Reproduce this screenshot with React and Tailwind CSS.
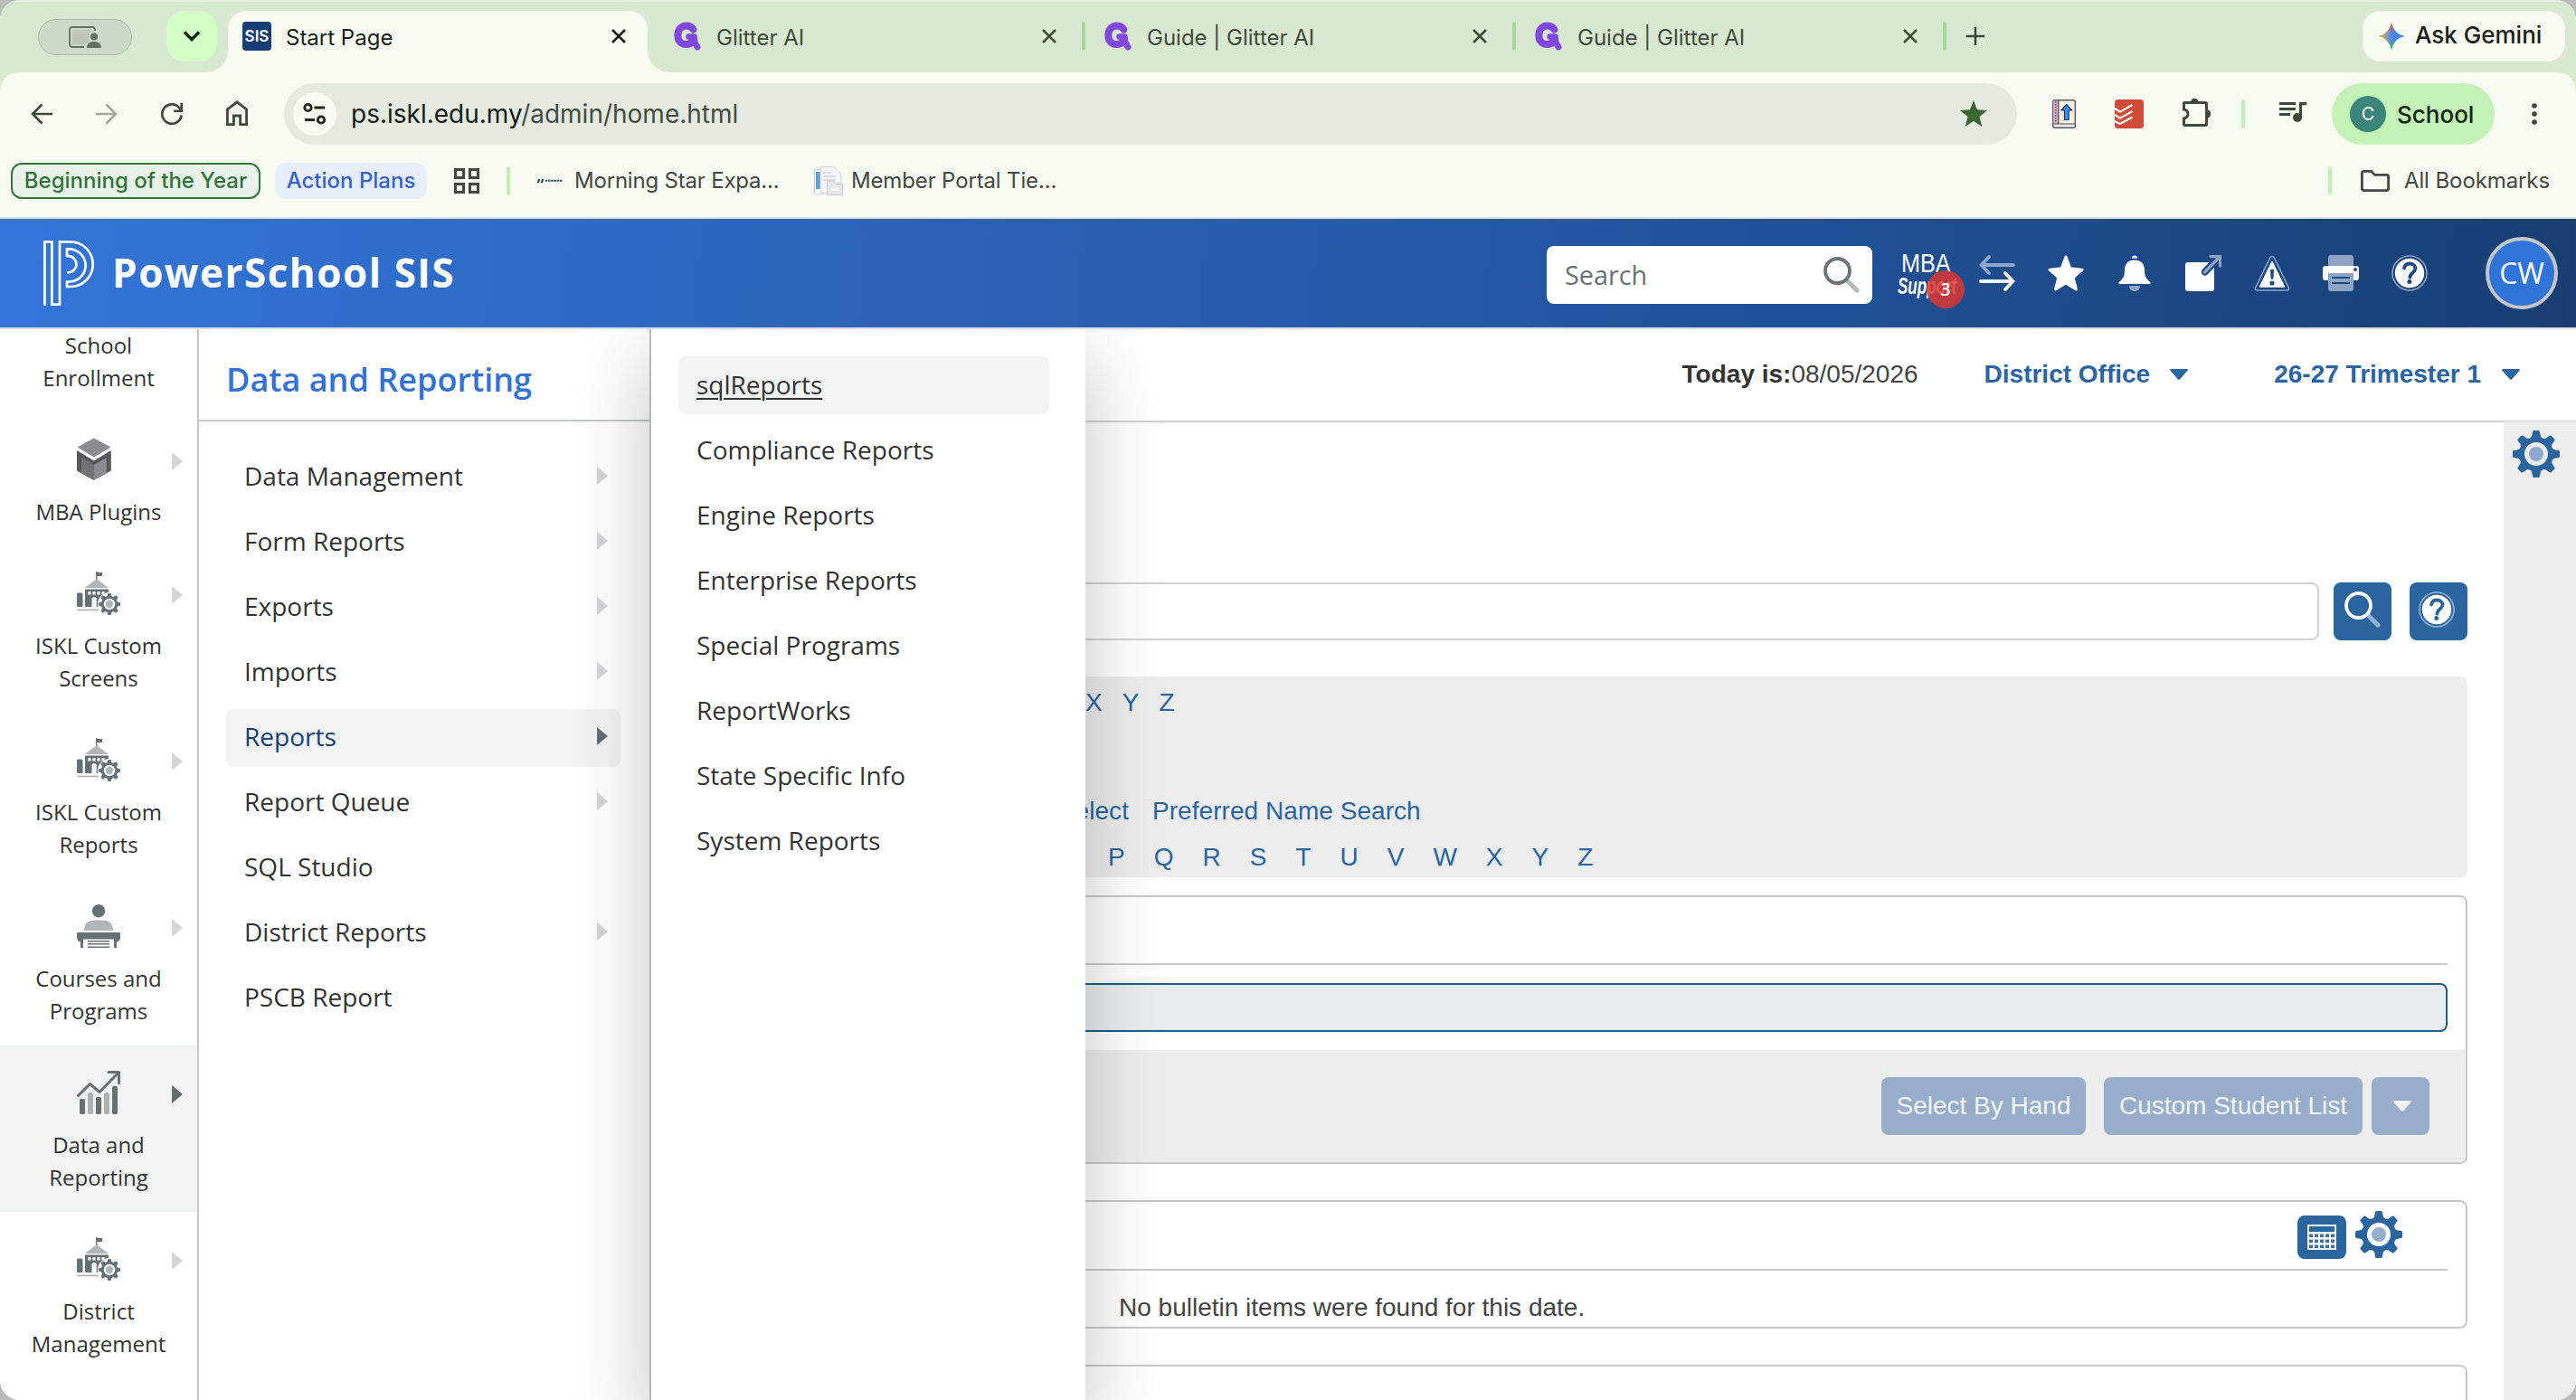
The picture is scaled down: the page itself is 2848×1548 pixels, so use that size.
import React from "react";

const TABS = ["Glitter AI", "Guide | Glitter AI", "Guide | Glitter AI"];

const SIDEBAR_ITEMS = [
    { label: "MBA Plugins", icon: "cube" },
    { label: "ISKL Custom Screens", icon: "school" },
    { label: "ISKL Custom Reports", icon: "school" },
    { label: "Courses and Programs", icon: "podium" },
    { label: "Data and Reporting", icon: "chart", active: true },
    { label: "District Management", icon: "school" },
];

const MENU_ITEMS = [
    { label: "Data Management", more: true },
    { label: "Form Reports", more: true },
    { label: "Exports", more: true },
    { label: "Imports", more: true },
    { label: "Reports", more: true, active: true },
    { label: "Report Queue", more: true },
    { label: "SQL Studio" },
    { label: "District Reports", more: true },
    { label: "PSCB Report" },
];

const REPORT_ITEMS = [
    "sqlReports",
    "Compliance Reports",
    "Engine Reports",
    "Enterprise Reports",
    "Special Programs",
    "ReportWorks",
    "State Specific Info",
    "System Reports",
];

const TEETH = [0, 45, 90, 135, 180, 225, 270, 315];

function Gear({ className, hole = "#fff", dot = "#94aecb" }) {
    return (
        <svg viewBox="0 0 52 52" className={className} fill="currentColor">
            <circle cx="26" cy="26" r="19" />
            {TEETH.map((deg) => (
                <path
                    key={deg}
                    d="M23.5 0h5a1.5 1.5 0 0 1 1.4 1.2l1 5.3 3.6 4.5h-17l3.6-4.5 1-5.3A1.5 1.5 0 0 1 23.5 0z"
                    transform={`rotate(${deg} 26 26)`}
                />
            ))}
            <circle cx="26" cy="26" r="13" fill={hole} />
            <circle cx="26" cy="26" r="8" fill={dot} />
        </svg>
    );
}

function CloseIcon() {
    return (
        <svg viewBox="0 0 16 16" className="size-4" stroke="currentColor" strokeWidth="2.6">
            <path d="M1 1l14 14M15 1L1 15" />
        </svg>
    );
}

function GlitterIcon() {
    return (
        <svg viewBox="0 0 32 32" className="size-8" fill="none" stroke="#8048dc" strokeLinecap="round" strokeLinejoin="round">
            <path d="M22.300 8.500C20.500 5.500 18 4.400 15 4.400C8.800 4.400 5.300 9.200 5.300 15.200C5.300 21.200 9 25 14.500 25C18.500 25 21.500 23 22.800 19.500" strokeWidth="8" />
            <path d="M17.500 16.500H23.500L24.500 24" strokeWidth="6.500" />
            <path d="M24.500 24l2.500 4" strokeWidth="7" />
        </svg>
    );
}

function MoreArrow({ active }) {
    return (
        <svg viewBox="0 0 12 20" className={active ? "h-5 w-3 text-[#646e72]" : "h-5 w-3 text-[#d3d7d8]"} fill="currentColor">
            <path d="M0 0l12 10L0 20z" />
        </svg>
    );
}

function DownTriangle({ className }) {
    return (
        <svg viewBox="0 0 20 12" className={className} fill="currentColor">
            <path d="M1 0h18c.9 0 1.3.9.7 1.6l-8.7 9.8c-.5.6-1.5.6-2 0L.3 1.6C-.3.9.1 0 1 0z" />
        </svg>
    );
}

function HelpIcon({ className, mark }) {
    return (
        <svg viewBox="0 0 40 40" className={className} fill="none">
            <circle cx="20" cy="20" r="19" stroke="#fff" strokeOpacity=".5" strokeWidth="1.6" />
            <circle cx="20" cy="20" r="16.2" fill="#fff" />
            <path d="M14 14.5c.6-3.4 3-5 6-5 3.600 0 6.400 2 6.400 5.200 0 4.800-6 5-6 10" stroke={mark} strokeWidth="3.800" strokeLinecap="round" />
            <circle cx="19.800" cy="29.600" r="2.500" fill={mark} />
        </svg>
    );
}

function SearchIcon({ className, ring, handle }) {
    return (
        <svg viewBox="0 0 40 40" className={className} fill="none">
            <path d="M26 26l11 11.200" stroke={handle} strokeWidth="5" strokeLinecap="round" />
            <circle cx="15.500" cy="15.500" r="13.500" stroke={ring} strokeWidth="3.800" />
        </svg>
    );
}

function SchoolIcon() {
    return (
        <svg viewBox="0 0 48 48" className="size-12">
            <path d="M21 0h1.500v1H28v4h-5.500v4H21z" fill="#667175" />
            <path d="M21.700 8L35 18H8.500z" fill="#b1b6b7" />
            <path d="M9 19.500h26V28l-5 11H9z" fill="#667175" />
            <path d="M12.500 22h3v3.500h-3zM17.500 22h3v3.500h-3zM22.500 22h3v3.500h-3zM27.500 22h3v3.500h-3z" fill="#fff" />
            <path d="M16.500 39V30.500a2.600 2.600 0 0 1 5.200 0V39z" fill="#fff" />
            <rect x="0" y="23.500" width="6.500" height="15.500" rx="1.500" fill="#667175" />
            <rect x="0" y="41.500" width="24" height="1.800" fill="#b1b6b7" />
            <circle cx="36" cy="36" r="13" fill="#fff" />
            <g transform="translate(24 24) scale(.4615)" fill="#667175">
                <circle cx="26" cy="26" r="20" />
                {TEETH.map((deg) => (
                    <path key={deg} d="M22.500 0h7l2 7 3 4h-17l3-4z" transform={`rotate(${deg} 26 26)`} />
                ))}
                <circle cx="26" cy="26" r="13.500" fill="#fff" />
                <circle cx="26" cy="26" r="9" fill="#b1b6b7" />
            </g>
        </svg>
    );
}

function SidebarIcon({ name }) {
    if (name === "cube") {
        return (
            <svg viewBox="0 0 48 48" className="size-12">
                <path d="M18.800 .5L37.500 10.500 18.800 21.500 0.500 10.500z" fill="#8b8c8e" />
                <path d="M0 14l18.800 11.500L37.800 14v22.500L18.800 47 0 36.500z" fill="#58585a" />
                <path d="M5 22l13.800 8V47L5 39z" fill="#727375" />
                <path d="M32.800 22l-14 8V47l14-8z" fill="#8b8c8e" />
            </svg>
        );
    }
    if (name === "podium") {
        return (
            <svg viewBox="0 0 48 48" className="size-12" fill="#667175">
                <circle cx="24" cy="7.200" r="7.200" />
                <path d="M8 29c0-8 5-11.500 11-11.500h10c6 0 11 3.500 11 11.500z" fill="#b1b6b7" />
                <path d="M1 31h46c.7 0 1 .4 1 1v4c0 3-1.500 5.500-4 5.500V48h-3V38.500H7V48H4v-6.500c-2.500 0-4-2.500-4-5.500v-4c0-.6.3-1 1-1z" />
                <path d="M12 40h24v1.500H12zM12 43h24v1.500H12zM12 46.500h24V48H12z" />
            </svg>
        );
    }
    if (name === "chart") {
        return (
            <svg viewBox="0 0 48 48" className="size-12" fill="#667175">
                <rect x="3" y="31" width="6" height="17" rx="1.500" />
                <rect x="12" y="24" width="6" height="24" rx="1.500" fill="#adb3b4" />
                <rect x="21" y="29" width="6" height="19" rx="1.500" />
                <rect x="30" y="24" width="6" height="24" rx="1.500" fill="#adb3b4" />
                <rect x="39" y="17" width="6" height="31" rx="1.500" />
                <path d="M1.500 27.500L14.500 14.500 25 23.500 45.500 2.500M35 1.500h11.500V13.500" fill="none" stroke="#667175" strokeWidth="3" strokeLinecap="round" strokeLinejoin="round" />
            </svg>
        );
    }
    return <SchoolIcon />;
}

function TabStrip() {
    return (
        <div className="flex h-20 border-t-2 border-[#e9f1e5] bg-[#d9e8d1] text-2xl">
            <div className="flex w-[244px] shrink-0 items-start pl-[42px]">
                <div className="mt-[19px] flex h-10 w-[104px] items-center justify-center rounded-full border border-[#adb8a9] bg-[#cfd9ca]">
                    <svg viewBox="0 0 36 24" className="h-6 w-9" fill="none">
                        <path d="M17 23H4a3 3 0 0 1-3-3V4a3 3 0 0 1 3-3h22a3 3 0 0 1 3 3v1" stroke="#686f66" strokeWidth="1.800" />
                        <path d="M4 4h21v2c-3 2-4 6-2 10l-4 4H4z" fill="#bdc6b9" />
                        <circle cx="28" cy="11.500" r="4" fill="#686f66" />
                        <path d="M20 24c0-4.500 3-7 8-7s8 2.500 8 7z" fill="#686f66" />
                    </svg>
                </div>
                <div className="mt-2.5 ml-[38px] flex size-14 items-center justify-center rounded-[20px] bg-[#d3ffc6]">
                    <svg viewBox="0 0 18 12" className="h-3 w-[18px]" fill="none" stroke="#0b2208" strokeWidth="3.400">
                        <path d="M1 1.500l8 8 8-8" />
                    </svg>
                </div>
            </div>

            <div className="relative flex h-full w-[476px] shrink-0 pt-2.5 pr-1 pl-2">
                <span className="absolute bottom-0 -left-4 size-6 bg-[radial-gradient(circle_at_0_0,transparent_23.5px,#f8fbf1_24px)]" />
                <span className="absolute -right-5 bottom-0 size-6 bg-[radial-gradient(circle_at_100%_0,transparent_23.5px,#f8fbf1_24px)]" />
                <div className="flex flex-1 items-start rounded-t-[20px] bg-[#f8fbf1] pl-4">
                    <div className="mt-3 flex size-8 items-center justify-center rounded bg-[#183f75] text-[17px] font-semibold text-white">
                        SIS
                    </div>
                    <span className="mt-[12px] ml-4 flex-1 leading-9 text-[#1a1d18]">Start Page</span>
                    <span className="mt-5 mr-6 text-[#1a1d18]">
                        <CloseIcon />
                    </span>
                </div>
            </div>

            {TABS.map((title, i) => (
                <div key={i} className="flex w-[476px] shrink-0 items-start pt-[22px] pl-6 text-[#3f4b3a]">
                    <GlitterIcon />
                    <span className="ml-4 flex-1 leading-9">{title}</span>
                    <span className="mt-2 mr-7">
                        <CloseIcon />
                    </span>
                    <span className="-mr-1 h-8 w-1 rounded-full bg-[#a6d79b]" />
                </div>
            ))}

            <svg viewBox="0 0 20 20" className="mt-7 ml-[26px] size-5" stroke="#3a4636" strokeWidth="2.600">
                <path d="M10 0v20M0 10h20" />
            </svg>

            <div className="mt-2.5 mr-3 ml-auto flex h-14 w-[224px] items-center rounded-[20px] bg-[#f8fbf1] pl-[17px]">
                <svg viewBox="0 0 30 30" className="size-[30px]">
                    <defs>
                        <linearGradient id="sparkH" x1="0" x2="1" y1="0" y2="0">
                            <stop offset="0" stopColor="#f5bd20" />
                            <stop offset=".45" stopColor="#6c8fd0" />
                            <stop offset=".6" stopColor="#4285f8" />
                        </linearGradient>
                        <linearGradient id="sparkV" x1="0" x2="0" y1="0" y2="1">
                            <stop offset=".05" stopColor="#ee4d3c" />
                            <stop offset=".4" stopColor="#ee4d3c" stopOpacity="0" />
                            <stop offset=".62" stopColor="#2fae55" stopOpacity="0" />
                            <stop offset=".95" stopColor="#2fae55" />
                        </linearGradient>
                    </defs>
                    <path d="M15 0C16.500 8 22 13.500 30 15 22 16.500 16.500 22 15 30 13.500 22 8 16.500 0 15 8 13.500 13.500 8 15 0z" fill="url(#sparkH)" />
                    <path d="M15 0C16.500 8 22 13.500 30 15 22 16.500 16.500 22 15 30 13.500 22 8 16.500 0 15 8 13.500 13.500 8 15 0z" fill="url(#sparkV)" />
                </svg>
                <span className="mb-0.5 ml-[11px] text-[26px] font-medium text-[#1a1d18]">Ask Gemini</span>
            </div>
        </div>
    );
}

function Toolbar() {
    return (
        <div className="bg-[#d9e8d1]">
            <div className="flex h-[92px] items-center rounded-t-[20px] bg-[#f8fbf1] pl-[34px] text-[#3c4a37]">
                <svg viewBox="0 0 24 24" className="size-6" fill="none" stroke="currentColor" strokeWidth="2.600">
                    <path d="M24 12H2.500M12.500 1.500L2 12l10.500 10.500" />
                </svg>
                <svg viewBox="0 0 24 24" className="ml-12 size-6" fill="none" stroke="#a3a89f" strokeWidth="2.600">
                    <path d="M0 12h21.500M11.500 1.500L22 12 11.500 22.500" />
                </svg>
                <svg viewBox="0 0 24 24" className="ml-12 size-6" fill="none" stroke="currentColor" strokeWidth="2.600">
                    <path d="M22.600 13.500A10.700 10.700 0 1 1 20 5l2 2.500M22.700 0v8.700H14" />
                </svg>
                <svg viewBox="0 0 24 28" className="mb-0.5 ml-12 h-7 w-6" fill="none" stroke="currentColor" strokeWidth="2.800">
                    <path d="M1.400 26.600V10L12 1.800 22.600 10v16.600h-7V17H8.400v9.600z" />
                </svg>

                <div className="ml-10 flex h-[68px] w-[1916px] items-center rounded-full bg-[#e4eae0] pl-2.5">
                    <div className="flex size-12 items-center justify-center rounded-full bg-[#f8fbf1]">
                        <svg viewBox="0 0 26 24" className="h-6 w-[26px]" fill="none" stroke="#1f261d" strokeWidth="2.800">
                            <circle cx="5.500" cy="5" r="3.700" />
                            <path d="M12.500 5H24M2 18.500h11" />
                            <circle cx="20" cy="18.500" r="3.700" />
                        </svg>
                    </div>
                    <span className="ml-4 flex-1 text-[28px] text-[#454b42]">
                        <span className="text-[#171b15]">ps.iskl.edu.my</span>/admin/home.html
                    </span>
                    <svg viewBox="0 0 30 30" className="mr-[33px] size-[30px]" fill="#3b6735">
                        <path d="M15 0l4 10.300 11 .8-8.500 7 2.800 11L15 23l-9.300 6.100 2.800-11-8.500-7 11-.8z" />
                    </svg>
                </div>

                <svg viewBox="0 0 26 32" className="ml-[39px] h-8 w-[26px]">
                    <rect x=".7" y=".7" width="24.600" height="30.600" rx="2" fill="#fbf0dc" stroke="#4d5b76" strokeWidth="1.400" />
                    <path d="M1.500 1.500h5v25h-5z" fill="#dcabc2" />
                    <path d="M3.800 2v24" stroke="#4d4457" strokeWidth="1.200" strokeDasharray="1.500 1.500" />
                    <path d="M6.800 1v26M1 27h24" stroke="#38425a" strokeWidth="1.200" />
                    <path d="M15.800 5.500l6 6.500h-3.600v10.500h-4.800V12H9.800z" fill="#3b8ff0" stroke="#233a63" strokeWidth="1.200" strokeLinejoin="round" />
                </svg>
                <svg viewBox="0 0 32 32" className="ml-[43px] size-8">
                    <rect width="32" height="32" rx="3.500" fill="#d24b38" />
                    <path d="M0 10l6 3.600L19.500 6M0 17l6 3.600L19.500 13M0 24l6 3L19.500 19.500" fill="none" stroke="#fff" strokeWidth="2.200" />
                </svg>
                <svg viewBox="0 0 32 32" className="mb-1 ml-[42px] size-8">
                    <path d="M3.500 5.500h23a1 1 0 0 1 1 1v23a1 1 0 0 1-1 1h-23a1 1 0 0 1-1-1v-6.500c6-1.500 6-8.500 0-10V6.500a1 1 0 0 1 1-1z" fill="none" stroke="currentColor" strokeWidth="3" />
                    <path d="M10 5a4.200 4.200 0 0 1 8.400 0zM28 13.500a4.500 4.500 0 0 1 0 9z" fill="currentColor" />
                </svg>
                <span className="ml-[34px] h-8 w-1 rounded-full bg-[#c3f0b6]" />
                <svg viewBox="0 0 30 24" className="mb-1 ml-[38px] h-6 w-[30px]" fill="currentColor">
                    <path d="M0 1h18v3H0zM0 7h18v3H0zM0 13h12v3H0zM22 1h8v3.200h-5V18h-3z" />
                    <circle cx="20" cy="18" r="5" />
                </svg>

                <div className="ml-7 flex h-[68px] w-[180px] items-center rounded-full bg-[#c4f1b5] pl-5">
                    <div className="flex size-10 items-center justify-center rounded-full bg-[#3b857a] text-xl text-white">
                        C
                    </div>
                    <span className="ml-3 text-[26px] font-medium text-[#0d2409]">School</span>
                </div>
                <svg viewBox="0 0 6 24" className="ml-[41px] h-6 w-1.5" fill="currentColor">
                    <circle cx="3" cy="3" r="2.800" />
                    <circle cx="3" cy="12" r="2.800" />
                    <circle cx="3" cy="21" r="2.800" />
                </svg>
            </div>
        </div>
    );
}

function BookmarksBar() {
    return (
        <div className="flex h-[70px] items-start border-b-2 border-[#dbe3d4] bg-[#f8fbf1] pt-2 pl-3 text-2xl leading-10 text-[#454743]">
            <div className="flex h-10 w-[276px] items-center justify-center rounded-xl border-2 border-[#34733a] bg-[#e9f3ea] font-medium text-[#34733a]">
                Beginning of the Year
            </div>
            <div className="ml-4 flex h-10 w-[168px] items-center justify-center rounded-xl bg-[#e9eefd] font-medium text-[#3662cc]">
                Action Plans
            </div>
            <svg viewBox="0 0 28 28" className="mt-1.5 ml-[30px] size-7" fill="none" stroke="#454743" strokeWidth="3">
                <path d="M1.500 1.500h9v9h-9zM17.500 1.500h9v9h-9zM1.500 17.500h9v9h-9zM17.500 17.500h9v9h-9z" />
            </svg>
            <span className="mt-1 ml-[30px] h-8 w-1 rounded-full bg-[#c3f0b6]" />
            <svg viewBox="0 0 30 6" className="mt-[17px] ml-[29px] h-1.5 w-[30px]">
                <path d="M1 5l1-4 2 0-1 4zM5 5l1-4 2 0-1 4z" fill="#26342f" />
                <path d="M10 2.800h19" stroke="#3d5570" strokeWidth="2" strokeDasharray="2.500 .6" />
            </svg>
            <span className="ml-3 w-[226px] tracking-[-0.2px]">Morning Star Expa...</span>
            <svg viewBox="0 0 32 32" className="mt-1 ml-[39px] size-8">
                <path d="M.5 3.500h9v27.500h-9z" fill="#fff" stroke="#c4cfdb" />
                <path d="M2 6h5.500v19H2z" fill="#5da1d5" />
                <path d="M7 .5h15l8 8v21H7z" fill="#f4f5f7" stroke="#ccd1d8" />
                <path d="M10 7h8M10 11h14M10 15h14" stroke="#cdd2d9" strokeWidth="1.500" />
                <path d="M14.500 16.500h7l2 3h8v12h-17z" fill="#e5e7ec" stroke="#c3c8d2" />
                <path d="M19 24h8v3h-8z" fill="#fff" />
            </svg>
            <span className="ml-[9px] tracking-[-0.15px]">Member Portal Tie...</span>
            <span className="mt-1 ml-auto h-8 w-1 rounded-full bg-[#c3f0b6]" />
            <svg viewBox="0 0 32 24" className="mt-2 ml-8 h-6 w-8" fill="none" stroke="#454743" strokeWidth="2.800">
                <path d="M3.400 1.400h8.200l4 4h13a2 2 0 0 1 2 2v13.200a2 2 0 0 1-2 2H3.400a2 2 0 0 1-2-2V3.400a2 2 0 0 1 2-2z" />
            </svg>
            <span className="mr-[29px] ml-4 tracking-[-0.1px]">All Bookmarks</span>
        </div>
    );
}

function AppHeader() {
    return (
        <header className="flex h-[122px] shrink-0 items-center border-b-2 border-[#dcdde0] bg-[linear-gradient(95deg,#3375d9_0%,#2a63b8_35%,#2358a4_58%,#1e4c8d_78%,#183e72_100%)] pl-12 font-['Open_Sans',sans-serif] text-white">
            <svg viewBox="0 0 56 72" className="h-[72px] w-14" fill="none" stroke="#fff" strokeWidth="2.700">
                <path d="M1.400 72V1.400h8V70.600H18V1.400h12A24.700 24.800 0 0 1 30 51H26V45.500h2A18.600 18.100 0 0 0 28 9.300H26V16.800c14 0 14 18.700 0 18.700" />
            </svg>
            <span className="mb-0.5 ml-[20px] text-[44px] font-bold tracking-[1.5px]">PowerSchool SIS</span>

            <div className="mt-1 ml-auto flex h-16 w-[360px] items-center rounded-lg bg-white pr-3.5 pl-5">
                <span className="flex-1 text-[28.800px] text-[#6a7175]">Search</span>
                <SearchIcon className="size-10" ring="#6a7478" handle="#b3b8ba" />
            </div>

            <div className="relative ml-7 h-[60px] w-[62px] font-['Liberation_Sans',Arial,sans-serif]">
                <div className="ml-1 origin-left scale-x-[.84] pt-1 text-[30px] leading-[30px]">MBA</div>
                <div className="-mt-1 origin-left scale-x-[.68] text-[25px] leading-[28px] font-bold italic">Support</div>
                <span className="absolute top-[27px] left-[32px] flex size-[42px] items-center justify-center rounded-full bg-[#da3732]/85 font-['Open_Sans',sans-serif] text-xl font-semibold">
                    3
                </span>
            </div>

            <div className="ml-7 flex gap-9 text-white">
                <svg viewBox="0 0 40 40" className="size-10" fill="none" stroke="currentColor" strokeWidth="3.800" strokeLinecap="round">
                    <path d="M38 11H3M11 2L2.500 11 11 20" strokeOpacity=".5" />
                    <path d="M2 29h35M29 20l8.500 9L29 38" />
                </svg>
                <svg viewBox="0 0 40 40" className="size-10" fill="currentColor" stroke="currentColor" strokeWidth="3" strokeLinejoin="round">
                    <path d="M20 2l4.800 12.800L38 16.200l-9.800 8.600L31.500 38 20 31 8.500 38l3.300-13.200L2 16.200l13.200-1.400z" />
                </svg>
                <svg viewBox="0 0 40 40" className="size-10" fill="currentColor">
                    <path d="M17 3.500a3 3 0 0 1 6 0zM20 5.500c7 0 11 4.500 11 11 0 7 1 9 6.500 13.500V32h-35v-2C8 25.500 9 23.500 9 16.500c0-6.500 4-11 11-11z" />
                    <path d="M14 34h12c0 3.500-2.500 6-6 6s-6-2.500-6-6z" opacity=".5" />
                </svg>
                <svg viewBox="0 0 40 40" className="size-10">
                    <path d="M3 8h23.500L18.500 16.500a4 4 0 0 0 5.500 5.500L32 14v23a3 3 0 0 1-3 3H3a3 3 0 0 1-3-3V11a3 3 0 0 1 3-3z" fill="#fff" />
                    <path d="M21.500 19L37 3M28 1.500h10.500V12" fill="none" stroke="#8ea4c5" strokeWidth="3.400" strokeLinecap="round" />
                </svg>
                <svg viewBox="0 0 40 40" className="size-10" strokeLinejoin="round">
                    <path d="M20 1.500c1 0 1.800.5 2.300 1.500l16 33c.8 1.700 0 3-1.800 3h-33c-1.800 0-2.600-1.300-1.800-3l16-33c.5-1 1.300-1.500 2.300-1.500z" fill="none" stroke="#fff" strokeOpacity=".5" strokeWidth="1.600" />
                    <path d="M20 7.500L33.500 35h-27z" fill="#fff" stroke="#fff" strokeWidth="1.500" />
                    <path d="M18 16h4l-.6 10.500h-2.800z" fill="#1d4985" />
                    <circle cx="20" cy="31" r="2.600" fill="#1d4985" />
                </svg>
                <svg viewBox="0 0 40 40" className="size-10">
                    <path d="M9 0h22a3 3 0 0 1 3 3v9H6V3a3 3 0 0 1 3-3z" fill="#8ea4c5" />
                    <path d="M3 12h34a3 3 0 0 1 3 3v10a3 3 0 0 1-3 3H3a3 3 0 0 1-3-3V15a3 3 0 0 1 3-3z" fill="#fff" />
                    <path d="M6 20h28v17a3 3 0 0 1-3 3H9a3 3 0 0 1-3-3z" fill="#8ea4c5" />
                    <path d="M10 25h20M10 31h20" stroke="#1d4985" strokeWidth="2" />
                    <circle cx="36" cy="16" r="1.900" fill="#1d4985" />
                </svg>
                <HelpIcon className="size-10" mark="#1d4985" />
            </div>

            <div className="mr-5 ml-16 flex size-20 items-center justify-center rounded-full border-4 border-[#c5c6c8] bg-[#3074d8] text-[32px] font-medium">
                CW
            </div>
        </header>
    );
}

function Sidebar() {
    return (
        <nav className="w-[220px] shrink-0 border-r-2 border-[#c3c8c9] bg-white text-center text-2xl leading-9 text-[#333]">
            <div className="h-[92px] px-8">School Enrollment</div>
            {SIDEBAR_ITEMS.map((item) => (
                <div
                    key={item.label}
                    className={
                        item.active
                            ? "relative flex flex-col items-center bg-[#f1f4f3] px-4 pt-7 pb-5"
                            : "relative flex flex-col items-center px-4 pt-7 pb-5"
                    }
                >
                    <SidebarIcon name={item.icon} />
                    <span className="absolute top-11 right-4">
                        <MoreArrow active={item.active} />
                    </span>
                    <span className="mt-4 max-w-[152px]">{item.label}</span>
                </div>
            ))}
        </nav>
    );
}

function SubMenu() {
    return (
        <div className="w-[498px] shrink-0 bg-white">
            <h1 className="flex h-[102px] items-center border-b-2 border-[#c3c8c9] pt-3 pl-[30px] text-[36px] font-semibold text-[#3272d6]">
                Data and Reporting
            </h1>
            <ul className="flex flex-col gap-2 pt-[30px] pr-8 pl-[30px]">
                {MENU_ITEMS.map((item) => (
                    <li
                        key={item.label}
                        className={
                            item.active
                                ? "flex h-16 items-center justify-between rounded-lg bg-[#f1f4f3] pr-3.5 pb-1 pl-5 text-[28px] text-[#153e78]"
                                : "flex h-16 items-center justify-between pr-3.5 pb-1 pl-5 text-[28px] text-[#333]"
                        }
                    >
                        {item.label}
                        {item.more && <MoreArrow active={item.active} />}
                    </li>
                ))}
            </ul>
        </div>
    );
}

function ReportsFlyout() {
    return (
        <div className="relative z-10 w-[482px] shrink-0 border-l-2 border-[#b3b8b9] bg-white shadow-[0_32px_80px_rgba(0,0,0,0.24)]">
            <ul className="flex flex-col gap-2 pt-[30px] pr-10 pl-[30px]">
                {REPORT_ITEMS.map((label, i) => (
                    <li
                        key={label}
                        className={
                            i === 0
                                ? "flex h-16 items-center rounded-lg bg-[#f1f4f3] pb-[3px] pl-5 text-[28px] text-[#333] underline decoration-2 underline-offset-4"
                                : "flex h-16 items-center pb-[3px] pl-5 text-[28px] text-[#333]"
                        }
                    >
                        {label}
                    </li>
                ))}
            </ul>
        </div>
    );
}

function StartPage() {
    return (
        <main className="flex flex-1 flex-col overflow-hidden bg-white font-['Liberation_Sans',Arial,sans-serif] text-[28px] text-[#444]">
            <div className="flex h-[103px] shrink-0 items-center border-b-2 border-[#d0d0d0] pr-[62px] pb-0.5">
                <span className="ml-auto">
                    <b className="text-[#333]">Today is:</b>08/05/2026
                </span>
                <span className="ml-[73px] font-bold text-[#2865a2]">District Office</span>
                <DownTriangle className="ml-[22px] h-3 w-5 text-[#2865a2]" />
                <span className="ml-[95px] font-bold text-[#2865a2]">26-27 Trimester 1</span>
                <DownTriangle className="ml-[23px] h-3 w-5 text-[#2865a2]" />
            </div>

            <div className="flex flex-1">
                <div className="flex w-[1528px] flex-col">
                    <div className="mt-[177px] flex h-16">
                        <div className="w-[1364px] rounded-r-lg border-2 border-l-0 border-[#d1d1d1]" />
                        <div className="ml-4 flex w-16 justify-center rounded-lg bg-[#2a65a0] pt-2.5">
                            <SearchIcon className="size-10" ring="#fff" handle="#93b1d0" />
                        </div>
                        <div className="ml-5 flex w-16 justify-center rounded-lg bg-[#2a65a0] pt-2.5 pr-1">
                            <HelpIcon className="size-10" mark="#2a65a0" />
                        </div>
                    </div>

                    <div className="mt-10 h-[222px] rounded-r-lg bg-[#ededed] pt-[9px] leading-10 text-[#2865a2]">
                        <div className="flex gap-[22px]">
                            {["X", "Y", "Z"].map((letter) => (
                                <span key={letter}>{letter}</span>
                            ))}
                        </div>
                        <div className="mt-20 flex tracking-[0.050px]">
                            <span className="flex w-12 justify-end overflow-hidden">Select</span>
                            <span className="ml-[26px]">Preferred Name Search</span>
                        </div>
                        <div className="mt-[11px] flex gap-8 pl-[25px]">
                            {"PQRSTUVWXYZ".split("").map((letter) => (
                                <span key={letter}>{letter}</span>
                            ))}
                        </div>
                    </div>

                    <div className="mt-5 h-[297px] rounded-r-lg border-2 border-l-0 border-[#c9c9c9]">
                        <div className="mr-5 h-[75px] border-b-2 border-[#c9c9c9]" />
                        <div className="mt-5 mr-5 h-[54px] rounded-r-lg border-2 border-l-0 border-[#255b86] bg-[#e8edf2]" />
                        <div className="mt-5 flex h-[124px] items-center rounded-br-md bg-[#ededed] pr-10 pb-px text-[#f3f6f9]">
                            <div className="ml-auto flex h-16 w-[226px] items-center justify-center rounded-lg bg-[#96aeca]">
                                Select By Hand
                            </div>
                            <div className="ml-5 flex h-16 w-[286px] items-center justify-center rounded-lg bg-[#96aeca]">
                                Custom Student List
                            </div>
                            <div className="ml-2.5 flex h-16 w-16 items-center justify-center rounded-lg bg-[#96aeca] pl-1">
                                <DownTriangle className="h-3 w-5" />
                            </div>
                        </div>
                    </div>

                    <div className="mt-10 h-[142px] rounded-r-lg border-2 border-l-0 border-[#c9c9c9]">
                        <div className="mr-5 flex h-[76px] justify-end border-b-2 border-[#c9c9c9] pr-[50px]">
                            <div className="mt-[15px] flex h-12 w-[54px] items-center justify-center rounded-lg bg-[#2a65a0]">
                                <svg viewBox="0 0 32 28" className="h-7 w-8">
                                    <path d="M0 0h32v28H0z" fill="#fff" />
                                    <path d="M2 2h28v6H2z" fill="#2a65a0" />
                                    {[10.500, 16.500, 22.500].map((y) =>
                                        [2, 8, 14, 20, 26].map((x) => (
                                            <rect key={`${x}-${y}`} x={x} y={y} width="4" height="3.600" fill="#3f6fa6" />
                                        ))
                                    )}
                                </svg>
                            </div>
                            <Gear className="mt-2.5 ml-2.5 size-[52px] text-[#2a65a0]" />
                        </div>
                        <p className="mt-[21px] ml-[37px] leading-10">No bulletin items were found for this date.</p>
                    </div>

                    <div className="mt-10 flex-1 rounded-tr-lg border-2 border-b-0 border-l-0 border-[#c9c9c9]" />
                </div>

                <aside className="-mt-px ml-auto flex w-20 justify-center bg-[#ededed] pt-2.5 pr-2">
                    <Gear className="size-[52px] text-[#2a65a0]" hole="#ededed" dot="#8eaaca" />
                </aside>
            </div>
        </main>
    );
}

function App() {
    return (
        <div className="h-[1548px] w-[2848px] bg-[#b9bbb9]">
            <div className="flex h-full flex-col overflow-hidden rounded-[22px] bg-white font-['Inter',sans-serif] whitespace-nowrap">
                <TabStrip />
                <Toolbar />
                <BookmarksBar />
                <AppHeader />
                <div className="flex min-h-0 flex-1 overflow-hidden font-['Open_Sans',sans-serif] whitespace-normal">
                    <Sidebar />
                    <SubMenu />
                    <ReportsFlyout />
                    <StartPage />
                </div>
            </div>
        </div>
    );
}

export default App;
